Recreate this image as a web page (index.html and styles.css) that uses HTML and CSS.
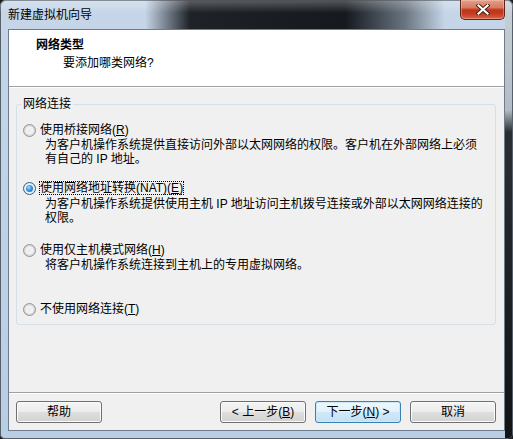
FILE: index.html
```html
<!DOCTYPE html>
<html lang="zh-CN">
<head>
<meta charset="utf-8">
<title>新建虚拟机向导</title>
<link rel="stylesheet" href="styles.css">
</head>
<body>
<div class="window">
  <div class="titlebar">
    <span class="title">新建虚拟机向导</span>
    <div class="close">
      <svg width="14" height="11" viewBox="0 0 14 11">
        <path d="M2.5 1.5 L11.5 9.5 M11.5 1.5 L2.5 9.5" stroke="#4a1a12" stroke-width="4" stroke-linecap="square" fill="none"/>
        <path d="M2.5 1.5 L11.5 9.5 M11.5 1.5 L2.5 9.5" stroke="#ffffff" stroke-width="2.2" stroke-linecap="square" fill="none"/>
      </svg>
    </div>
  </div>
  <div class="client">
    <div class="header">
      <div class="h-title">网络类型</div>
      <div class="h-sub">要添加哪类网络?</div>
    </div>
    <div class="content">
      <fieldset class="group">
        <legend>网络连接</legend>
        <div class="opt opt-1"><span class="radio"></span><span class="lbl">使用桥接网络(<u>R</u>)</span></div>
        <div class="desc desc-1">为客户机操作系统提供直接访问外部以太网网络的权限。客户机在外部网络上必须<br>有自己的 IP 地址。</div>
        <div class="opt opt-2"><span class="radio checked"></span><span class="lbl focus">使用网络地址转换(NAT)(<u>E</u>)</span></div>
        <div class="desc desc-2">为客户机操作系统提供使用主机 IP 地址访问主机拨号连接或外部以太网网络连接的<br>权限。</div>
        <div class="opt opt-3"><span class="radio"></span><span class="lbl">使用仅主机模式网络(<u>H</u>)</span></div>
        <div class="desc desc-3">将客户机操作系统连接到主机上的专用虚拟网络。</div>
        <div class="opt opt-4"><span class="radio"></span><span class="lbl">不使用网络连接(<u>T</u>)</span></div>
      </fieldset>
    </div>
    <div class="footer">
      <button class="btn">帮助</button>
      <div class="nav">
        <button class="btn">&lt; 上一步(<u>B</u>)</button>
        <button class="btn default">下一步(<u>N</u>) &gt;</button>
        <button class="btn">取消</button>
      </div>
    </div>
  </div>
</div>
</body>
</html>
```

FILE: styles.css
```css
html, body {
  margin: 0;
  padding: 0;
}
body {
  width: 513px;
  height: 439px;
  overflow: hidden;
  font-family: "Liberation Sans", "Noto Sans CJK SC", sans-serif;
  font-size: 12px;
  line-height: 14px;
  color: #000;
  background: #1a1d20;
}
.window {
  width: 513px;
  height: 439px;
  box-sizing: border-box;
  display: flex;
  flex-direction: column;
  border-radius: 6px 6px 5px 5px;
  overflow: hidden;
  background:
    linear-gradient(to bottom, #c9d0d7 0, #b3bcc5 110px, #2a2f34 132px, #111315 100%) right top / 8px 100% no-repeat,
    linear-gradient(to bottom, #c6d6e8 0, #b9cde3 100%);
  box-shadow: inset 0 0 0 1px #55606c;
}
.titlebar {
  height: 29px;
  flex: none;
  display: flex;
  align-items: flex-start;
  background:
    linear-gradient(to bottom, rgba(255,255,255,0.28) 0, rgba(255,255,255,0) 13px),
    linear-gradient(90deg, rgba(12,15,19,0) 145px, rgba(12,15,19,0.9) 190px, rgba(12,15,19,0.95) 345px, rgba(30,36,42,0.55) 405px, rgba(120,130,140,0) 445px);
}
.title {
  padding: 8px 0 0 8px;
  color: #000;
  line-height: 14px;
}
.close {
  margin-left: auto;
  margin-right: 8px;
  width: 45px;
  height: 20px;
  box-sizing: border-box;
  border: 1px solid #5a2419;
  border-top: none;
  border-radius: 0 0 5px 5px;
  background: linear-gradient(to bottom, #e3a08a 0, #d77a62 40%, #c0341a 52%, #c23c1d 72%, #d9654a 100%);
  box-shadow: inset 0 0 0 1px rgba(255,220,210,0.35);
  display: flex;
  align-items: center;
  justify-content: center;
}
.client {
  flex: 1;
  margin: 0 8px 8px 8px;
  border: 1px solid #6e7c8c;
  background: #f0f0f0;
  display: flex;
  flex-direction: column;
  min-height: 0;
}
.header {
  flex: none;
  background: #fff;
  border-bottom: 1px solid #a0a0a0;
  padding-top: 8px;
  box-sizing: content-box;
  height: 48px;
}
.h-title {
  font-weight: bold;
  padding-left: 27px;
}
.h-sub {
  padding-left: 54px;
  margin-top: 4px;
}
.content {
  flex: 1;
  padding: 10px 8px 0 7px;
  box-shadow: inset 0 1px #fff;
}
.group {
  margin: 0;
  padding: 0 6px 8px 6px;
  border: 1px solid #d5dfe5;
  border-radius: 3px;
  min-width: 0;
}
.group legend {
  padding: 0 2px;
  margin-left: -2px;
  line-height: 14px;
}
.opt {
  display: flex;
  align-items: center;
  height: 14px;
}
.opt-1 { margin-top: 12px; }
.opt-2 { margin-top: 15px; }
.opt-3 { margin-top: 18px; }
.opt-4 { margin-top: 30px; }
.desc {
  padding-left: 22px;
  line-height: 14px;
}
.desc-1 { margin-top: 1px; }
.desc-2 { margin-top: 2px; }
.desc-3 { margin-top: 1px; }
.radio {
  width: 13px;
  height: 13px;
  box-sizing: border-box;
  border-radius: 50%;
  border: 1px solid #8f9396;
  background: radial-gradient(circle at 50% 50%, #e9e9e9 0, #f4f4f4 45%, #d6d6d6 60%, #f8f8f8 100%);
  flex: none;
  position: relative;
}
.radio.checked {
  border-color: #2c628b;
  background: radial-gradient(circle at 50% 50%, #ffffff 0, #e8eef3 60%, #c6d8e6 100%);
}
.radio.checked::after {
  content: "";
  position: absolute;
  left: 2px;
  top: 2px;
  width: 7px;
  height: 7px;
  border-radius: 50%;
  background: radial-gradient(circle at 40% 35%, #aee0fb 0, #3d9ee0 40%, #155b9a 100%);
}
.lbl {
  margin-left: 4px;
  white-space: nowrap;
}
.lbl.focus {
  margin-left: 3px;
  border: 1px dotted #000;
  line-height: 12px;
}
.footer {
  flex: none;
  border-top: 1px solid #a0a0a0;
  box-shadow: inset 0 1px #fff;
  padding: 8px 8px 7px 7px;
  display: flex;
  align-items: center;
}
.nav {
  margin-left: auto;
  display: flex;
  gap: 9px;
}
.btn {
  width: 86px;
  height: 22px;
  box-sizing: border-box;
  border: 1px solid #707070;
  border-radius: 3px;
  background: linear-gradient(to bottom, #f4f4f4 0, #ececec 50%, #dfdfdf 50%, #d2d2d2 100%);
  box-shadow: inset 0 0 0 1px #fbfbfb;
  font-family: "Liberation Sans", "Noto Sans CJK SC", sans-serif;
  font-size: 12px;
  line-height: 20px;
  color: #000;
  padding: 0;
  text-align: center;
}
.btn.default {
  border-color: #3c7fb1;
  background: linear-gradient(to bottom, #eef7fd 0, #e2f1fb 50%, #d0e9f8 50%, #c3e1f4 100%);
  box-shadow: inset 0 0 0 1px #cde8f8;
}
```
